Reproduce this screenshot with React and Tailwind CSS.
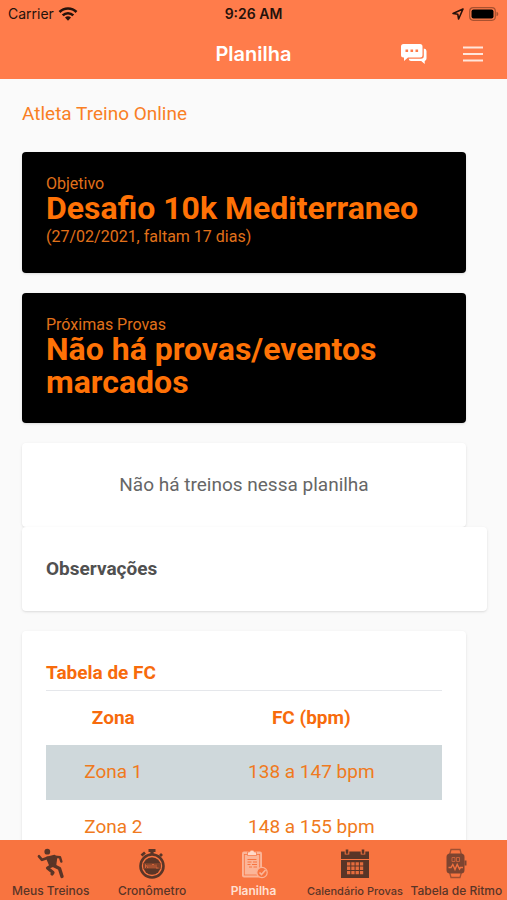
import { useState } from 'react'

const goals = [
  { label: 'Objetivo', title: 'Desafio 10k Mediterraneo', note: '(27/02/2021, faltam 17 dias)' },
  { label: 'Próximas Provas', title: 'Não há provas/eventos marcados' },
]

const zones = [
  { name: 'Zona 1', range: '138 a 147 bpm' },
  { name: 'Zona 2', range: '148 a 155 bpm' },
]

const tabs = [
  { label: 'Meus Treinos', Icon: RunnerIcon },
  { label: 'Cronômetro', Icon: StopwatchIcon },
  { label: 'Planilha', Icon: ClipboardIcon },
  { label: 'Calendário Provas', Icon: CalendarIcon, compact: true },
  { label: 'Tabela de Ritmo', Icon: WatchIcon },
]

function RunnerIcon() {
  return (
    <svg viewBox="0 0 32 32" className="size-8" fill="none" stroke="currentColor" strokeLinecap="round" strokeLinejoin="round">
      <circle cx="12.300" cy="3.700" r="2.900" fill="currentColor" stroke="none" />
      <path d="M11.500 9.500L19.500 7.500L21.500 10L20.500 17.500L15.500 19Z" fill="currentColor" strokeWidth="1.500" />
      <path d="M13 9.800L7 11.800L4 8.300" strokeWidth="2.700" />
      <path d="M20 8.800L25 9.300L26.300 13.500" strokeWidth="2.500" />
      <path d="M16.500 17.500L12.500 20L18 24.500L17 26" strokeWidth="3.200" />
      <path d="M18.500 17.500L24.500 20.500L27 28.500" strokeWidth="3.400" />
    </svg>
  )
}

function StopwatchIcon() {
  return (
    <svg viewBox="0 0 32 32" className="size-8" fill="none" stroke="currentColor">
      <path d="M12.500 2.500h7M16 2.500v4" strokeWidth="3.200" />
      <path d="M5.500 7.500l3.500-3M24 8l2-2" strokeWidth="2.800" />
      <circle cx="16" cy="18" r="11.500" strokeWidth="2.600" />
      <circle cx="16" cy="18" r="8.800" fill="currentColor" stroke="none" />
      <path d="M7.500 15h17v6h-17z" fill="#7d4129" stroke="none" />
      <path d="M9.500 20v-3.500l2.500 3.500v-3.500M14 16.500v3.500M16 20v-3.500h2V20M20 16.500V20h2.500" stroke="#d9673c" strokeWidth=".9" />
    </svg>
  )
}

function ClipboardIcon() {
  return (
    <svg viewBox="0 0 32 32" className="size-8" fill="none" stroke="currentColor">
      <rect x="4" y="3.500" width="20" height="26" rx="2" fill="#fbb598" stroke="none" />
      <rect x="6.300" y="6.500" width="15.400" height="20.500" stroke="#f87440" strokeWidth=".8" />
      <path d="M9.500 7.500V4h2a2.600 2.600 0 0 1 5 0h2v3.500z" fill="#ffd9c9" stroke="#f87440" strokeWidth=".7" />
      <path d="M9.500 11.500h9M9.500 14h4M15 14h4M9.500 16.500h3M14 16.500h5M11 19h3M15.500 19H19" stroke="#f87440" strokeWidth="1" />
      <circle cx="24" cy="24.500" r="5.200" fill="#f87440" stroke="#fbb598" strokeWidth="1.200" />
      <path d="M21.500 24.500l2 2 4-4.500" stroke="#fbb598" strokeWidth="1.700" />
    </svg>
  )
}

function CalendarIcon() {
  return (
    <svg viewBox="0 0 32 32" className="size-8">
      <path d="M2 3.500h28V11H2zM2 12h28v18H2z" fill="currentColor" />
      <path d="M5.700 1h4.600v5.500H5.700zM21.700 1h4.600v5.500h-4.600z" fill="#f87440" />
      <path d="M6.700 1.500h2.600v4.300H6.700zM22.700 1.500h2.600v4.300h-2.600z" fill="currentColor" />
      <path d="M8 14.300h3.300v3.300H8zM12.300 14.300h3.300v3.300h-3.300zM16.600 14.300h3.300v3.300h-3.300zM20.900 14.300h3.300v3.300h-3.300zM8 18.600h3.300v3.300H8zM12.300 18.600h3.300v3.300h-3.300zM16.600 18.600h3.300v3.300h-3.300zM20.900 18.600h3.300v3.300h-3.300zM8 22.900h3.300v3.300H8zM12.300 22.900h3.300v3.300h-3.300zM16.600 22.900h3.300v3.300h-3.300zM20.900 22.900h3.300v3.300h-3.300z" fill="#e56c3d" />
    </svg>
  )
}

function WatchIcon() {
  return (
    <svg viewBox="0 0 32 32" className="size-8" fill="none" stroke="currentColor">
      <path d="M9.500 7L11 1.500h9L21.500 7M9.500 24L11 29.500h9l1.500-5.500" stroke="#a04f31" strokeWidth="1.300" />
      <rect x="6.500" y="5.500" width="18" height="20" rx="3.500" fill="#7d4430" stroke="none" />
      <path d="M25.500 12.500v5" stroke="#7d4430" strokeWidth="2" />
      <path d="M12 9.500h3v4h-3zM16.500 9.500h3v4h-3z" stroke="#d9673c" strokeWidth=".8" />
      <path d="M8.500 19.500H11l1.800-3 2.200 5 2.200-5 2.300 4.500 1-1.500H23" stroke="#f0703f" strokeWidth="1.400" />
    </svg>
  )
}

function StatusBar() {
  return (
    <div className="grid h-7 grid-cols-3 items-center px-2 text-sm text-[#25120b]">
      <div className="flex items-center gap-1">
        <span>Carrier</span>
        <svg viewBox="0 0 20 15" className="h-4 w-5" fill="none" stroke="currentColor" strokeWidth="2.600">
          <path d="M1.500 5.500a12 12 0 0 1 17 0" />
          <path d="M4.700 8.900a7.500 7.500 0 0 1 10.600 0" />
          <path d="M10 14.300l-3-3.200a4.300 4.300 0 0 1 6 0z" fill="currentColor" stroke="none" />
        </svg>
      </div>
      <span className="text-center font-semibold">9:26 AM</span>
      <div className="flex items-center justify-end gap-1">
        <svg viewBox="0 0 14 14" className="size-3.5" fill="none" stroke="currentColor" strokeWidth="1.600" strokeLinejoin="round">
          <path d="M12 2L2 6.500l4.800.8.800 4.700z" />
        </svg>
        <svg viewBox="0 0 30 14" className="h-3.5 w-[30px]">
          <rect x=".7" y=".7" width="25.600" height="12.600" rx="3.500" fill="none" stroke="#a9512f" strokeWidth="1.200" />
          <rect x="2.500" y="2.500" width="22" height="9" rx="2" fill="#000" />
          <path d="M27.500 4.800q1.800.5 1.800 2.200t-1.800 2.200z" fill="#a9512f" />
        </svg>
      </div>
    </div>
  )
}

function Header() {
  return (
    <header className="shrink-0 bg-[#ff7c4b] font-[Inter,sans-serif]">
      <StatusBar />
      <div className="grid h-[51px] grid-cols-3 items-center px-6 text-white">
        <h1 className="col-start-2 text-center text-xl font-semibold">Planilha</h1>
        <div className="flex items-center justify-end gap-9">
          <button type="button" aria-label="Mensagens">
            <svg viewBox="0 0 26 20" className="h-5 w-[26px]" fill="currentColor">
              <path d="M2.500 0h16.500a2.500 2.500 0 0 1 2.500 2.500v8.500a2.500 2.500 0 0 1-2.500 2.500H7L3 17v-3.500h-.5A2.500 2.500 0 0 1 0 11V2.500A2.500 2.500 0 0 1 2.500 0z" />
              <path d="M22.800 4.500q2.700.3 2.700 2.500v7.500a2.500 2.500 0 0 1-1.800 2.400V20l-3.500-3H10q-2 0-2.300-2.200H20q2.800 0 2.800-2.800z" />
              <path d="M4.500 5.500h2.600v2.400H4.500zM9.500 5.500h2.600v2.400H9.500zM14.500 5.500h2.600v2.400h-2.600z" fill="#ff7c4b" />
            </svg>
          </button>
          <button type="button" aria-label="Menu">
            <svg viewBox="0 0 20 16" className="h-4 w-5" stroke="#ffe6dc" strokeWidth="2">
              <path d="M0 1.500h20M0 8h20M0 14.500h20" />
            </svg>
          </button>
        </div>
      </div>
    </header>
  )
}

function GoalCard({ goal }) {
  return (
    <section className="mr-[41px] mb-5 rounded-sm bg-black p-6 text-[#ff7206] shadow">
      <p className="text-base leading-4 text-[#e0711a]">{goal.label}</p>
      <h2 className="text-[32px] leading-[33px] font-bold">{goal.title}</h2>
      {goal.note && <p className="text-base leading-6 text-[#e0711a]">{goal.note}</p>}
    </section>
  )
}

function ZoneTable() {
  return (
    <section className="mr-[41px] rounded-sm bg-white p-6 text-[19px] text-[#f07a20] shadow">
      <h2 className="border-b border-gray-200 leading-[35px] font-bold text-[#f76b0c]">Tabela de FC</h2>
      <table className="w-full table-fixed text-center">
        <thead>
          <tr className="h-[54px] text-[#f76b0c]">
            <th className="w-[34%]">Zona</th>
            <th>FC (bpm)</th>
          </tr>
        </thead>
        <tbody>
          {zones.map((zone) => (
            <tr key={zone.name} className="h-[55px] odd:bg-[#cfd8db]">
              <td>{zone.name}</td>
              <td>{zone.range}</td>
            </tr>
          ))}
        </tbody>
      </table>
    </section>
  )
}

function TabBar() {
  const [active, setActive] = useState('Planilha')

  return (
    <nav className="flex h-[60px] shrink-0 items-start overflow-hidden bg-[#f87440] font-[Inter,sans-serif]">
      {tabs.map(({ label, Icon, compact }) => (
        <button
          key={label}
          type="button"
          onClick={() => setActive(label)}
          className={`flex flex-1 basis-0 flex-col items-center pt-2 whitespace-nowrap ${
            compact ? 'text-[11px]' : 'text-xs'
          } ${active === label ? 'font-semibold text-[#ffe0d3]' : 'font-medium text-[#5a3527]'}`}
        >
          <Icon />
          <span className="leading-[22px]">{label}</span>
        </button>
      ))}
    </nav>
  )
}

export default function App() {
  return (
    <div className="flex h-screen flex-col bg-[#fafafa] font-[Roboto,sans-serif]">
      <Header />
      <main className="min-h-0 flex-1 overflow-y-auto pt-5 pl-[22px] [scrollbar-width:none]">
        <p className="mb-[23px] text-[19px] leading-[30px] text-[#f97f24]">Atleta Treino Online</p>
        {goals.map((goal) => (
          <GoalCard key={goal.label} goal={goal} />
        ))}
        <section className="mr-[41px] rounded-sm bg-white p-6 text-center text-[19px] leading-9 text-[#666] shadow">
          Não há treinos nessa planilha
        </section>
        <section className="relative mr-5 mb-5 rounded-sm bg-white p-6 shadow">
          <h2 className="text-[19px] leading-9 font-bold text-[#505050]">Observações</h2>
        </section>
        <ZoneTable />
      </main>
      <TabBar />
    </div>
  )
}
